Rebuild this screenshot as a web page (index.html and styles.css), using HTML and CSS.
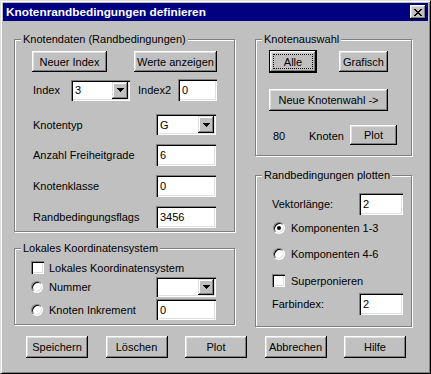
FILE: index.html
```html
<!DOCTYPE html>
<html lang="de">
<head>
    <meta charset="UTF-8">
    <title>Knotenrandbedingungen definieren</title>
    <link rel="stylesheet" href="styles.css">
</head>
<body>

<div class="window">
    <div class="titlebar">
        <span class="title">Knotenrandbedingungen definieren</span>
        <span class="close-btn">
            <svg width="8" height="7" viewBox="0 0 8 7"><path d="M0 0h2v1H0z M6 0h2v1H6z M1 1h2v1H1z M5 1h2v1H5z M2 2h4v1H2z M3 3h2v1H3z M2 4h4v1H2z M1 5h2v1H1z M5 5h2v1H5z M0 6h2v1H0z M6 6h2v1H6z" fill="#000"/></svg>
        </span>
    </div>

    <div class="content">
        <!-- linke Spalte -->
        <div class="col">
            <div class="group group-daten">
                <span class="group-label">Knotendaten (Randbedingungen)</span>
                <div class="row btn-row">
                    <button class="btn btn-neu">Neuer Index</button>
                    <button class="btn btn-werte">Werte anzeigen</button>
                </div>
                <div class="row row-index">
                    <span class="lbl lbl-index">Index</span>
                    <div class="combo combo-index">
                        <span class="val">3</span>
                        <span class="drop"><svg width="7" height="4" viewBox="0 0 7 4"><path d="M0 0h7v1H0z M1 1h5v1H1z M2 2h3v1H2z M3 3h1v1H3z" fill="#000"/></svg></span>
                    </div>
                    <span class="lbl lbl-index2">Index2</span>
                    <div class="field field-index2">0</div>
                </div>
                <div class="row frow frow-first">
                    <span class="lbl lbl-wide">Knotentyp</span>
                    <div class="combo combo-wide">
                        <span class="val">G</span>
                        <span class="drop"><svg width="7" height="4" viewBox="0 0 7 4"><path d="M0 0h7v1H0z M1 1h5v1H1z M2 2h3v1H2z M3 3h1v1H3z" fill="#000"/></svg></span>
                    </div>
                </div>
                <div class="row frow">
                    <span class="lbl lbl-wide">Anzahl Freiheitgrade</span>
                    <div class="field field-wide">6</div>
                </div>
                <div class="row frow">
                    <span class="lbl lbl-wide">Knotenklasse</span>
                    <div class="field field-wide">0</div>
                </div>
                <div class="row frow">
                    <span class="lbl lbl-wide">Randbedingungsflags</span>
                    <div class="field field-wide">3456</div>
                </div>
            </div>

            <div class="group group-lokal">
                <span class="group-label">Lokales Koordinatensystem</span>
                <div class="row check-row">
                    <span class="checkbox"></span>
                    <span class="lbl check-lbl">Lokales Koordinatensystem</span>
                </div>
                <div class="row opt-row opt-nummer">
                    <span class="radio"></span>
                    <span class="lbl opt-lbl">Nummer</span>
                    <div class="combo combo-wide combo-short">
                        <span class="val"></span>
                        <span class="drop"><svg width="7" height="4" viewBox="0 0 7 4"><path d="M0 0h7v1H0z M1 1h5v1H1z M2 2h3v1H2z M3 3h1v1H3z" fill="#000"/></svg></span>
                    </div>
                </div>
                <div class="row opt-row opt-inkrement">
                    <span class="radio"></span>
                    <span class="lbl opt-lbl">Knoten Inkrement</span>
                    <div class="field field-wide field-short">0</div>
                </div>
            </div>
        </div>

        <!-- rechte Spalte -->
        <div class="col">
            <div class="group group-auswahl">
                <span class="group-label">Knotenauswahl</span>
                <div class="row btn-row2">
                    <button class="btn btn-default btn-alle"><span class="focus">Alle</span></button>
                    <button class="btn btn-grafisch">Grafisch</button>
                </div>
                <button class="btn btn-neue">Neue Knotenwahl -&gt;</button>
                <div class="row plot-row">
                    <span class="lbl num-lbl">80</span>
                    <span class="lbl knoten-lbl">Knoten</span>
                    <button class="btn btn-plot">Plot</button>
                </div>
            </div>

            <div class="group group-plot">
                <span class="group-label">Randbedingungen plotten</span>
                <div class="row frow-r">
                    <span class="lbl lbl-r">Vektorlänge:</span>
                    <div class="field field-r">2</div>
                </div>
                <div class="row radio-row radio-first">
                    <span class="radio checked"></span>
                    <span class="lbl">Komponenten 1-3</span>
                </div>
                <div class="row radio-row">
                    <span class="radio"></span>
                    <span class="lbl">Komponenten 4-6</span>
                </div>
                <div class="row check-row2">
                    <span class="checkbox"></span>
                    <span class="lbl">Superponieren</span>
                </div>
                <div class="row frow-r frow-farb">
                    <span class="lbl lbl-r">Farbindex:</span>
                    <div class="field field-r">2</div>
                </div>
            </div>
        </div>
    </div>

    <div class="footer">
        <button class="btn btn-foot">Speichern</button>
        <button class="btn btn-foot">Löschen</button>
        <button class="btn btn-foot">Plot</button>
        <button class="btn btn-foot">Abbrechen</button>
        <button class="btn btn-foot">Hilfe</button>
    </div>
</div>

</body>
</html>
```

FILE: styles.css
```css
* {
    box-sizing: border-box;
}
body {
    margin: 0;
    font-family: "Liberation Sans", Arial, sans-serif;
    font-size: 11px;
    color: #000;
}
.window {
    width: 431px;
    height: 374px;
    background: #c0c0c0;
    border: 1px solid;
    border-color: #dfdfdf #000 #000 #dfdfdf;
    box-shadow: inset 1px 1px #fff, inset -1px -1px #808080;
    padding: 2px;
}
.titlebar {
    height: 18px;
    background: #000080;
    color: #fff;
    display: flex;
    align-items: center;
    justify-content: space-between;
    padding: 0 2px 0 3px;
    font-weight: bold;
    font-size: 11.8px;
}
.close-btn {
    width: 16px;
    height: 14px;
    background: #c0c0c0;
    display: flex;
    align-items: center;
    justify-content: center;
    box-shadow: inset -1px -1px #000, inset 1px 1px #fff, inset -2px -2px #808080, inset 2px 2px #dfdfdf;
}
.close-btn svg {
    display: block;
    margin-left: -1px;
}

.content {
    display: grid;
    grid-template-columns: 221px 157px;
    column-gap: 20px;
    padding: 18px 0 0 11px;
    align-items: start;
}
.col {
    display: flex;
    flex-direction: column;
}

/* Gruppenrahmen */
.group {
    position: relative;
    border: 1px solid #808080;
    box-shadow: inset 1px 1px #fff, 1px 1px #fff;
}
.group-label {
    position: absolute;
    top: -7px;
    left: 6px;
    padding: 0 2px;
    background: #c0c0c0;
    line-height: 13px;
    white-space: nowrap;
}
.group-daten { height: 193px; padding: 11px 0 0 17px; }
.group-lokal { height: 77px; margin-top: 16px; padding: 12px 0 0 16px; }
.group-auswahl { height: 117px; padding: 10px 0 0 13px; }
.group-plot { height: 152px; margin-top: 19px; padding: 17px 0 0 16px; }

.row {
    display: flex;
    align-items: center;
}
.lbl {
    white-space: nowrap;
}

/* Knöpfe */
.btn {
    font: inherit;
    color: #000;
    background: #c0c0c0;
    border: 0;
    padding: 0;
    height: 21px;
    box-shadow: inset -1px -1px #000, inset 1px 1px #fff, inset -2px -2px #808080, inset 2px 2px #dfdfdf;
}
.btn-default {
    display: flex;
    box-shadow: inset 0 0 0 1px #000, inset -2px -2px #000, inset 2px 2px #fff, inset -3px -3px #808080, inset 3px 3px #dfdfdf;
}
.btn-default .focus {
    flex: 1;
    margin: 4px;
    border: 1px dotted #000;
    display: flex;
    align-items: center;
    justify-content: center;
}

/* Eingabefelder */
.field {
    background: #fff;
    display: flex;
    align-items: center;
    padding-left: 4px;
    box-shadow: inset 1px 1px #808080, inset 2px 2px #000, inset -1px -1px #fff, inset -2px -2px #dfdfdf;
}
.combo {
    background: #fff;
    display: flex;
    align-items: stretch;
    padding: 2px;
    box-shadow: inset 1px 1px #808080, inset 2px 2px #000, inset -1px -1px #fff, inset -2px -2px #dfdfdf;
}
.combo .val {
    flex: 1;
    display: flex;
    align-items: center;
    padding-left: 2px;
}
.combo .drop {
    width: 16px;
    background: #c0c0c0;
    display: flex;
    align-items: center;
    justify-content: center;
    box-shadow: inset -1px -1px #000, inset 1px 1px #dfdfdf, inset -2px -2px #808080, inset 2px 2px #fff;
}
.combo .drop svg {
    display: block;
}
.checkbox {
    width: 13px;
    height: 13px;
    flex-shrink: 0;
    background: #fff;
    box-shadow: inset 1px 1px #808080, inset 2px 2px #000, inset -1px -1px #fff, inset -2px -2px #dfdfdf;
}
.radio {
    width: 12px;
    height: 12px;
    flex-shrink: 0;
    border-radius: 50%;
    background: #fff;
    border: 1px solid;
    border-color: #808080 #fff #fff #808080;
    box-shadow: inset 1px 1px #000, inset -1px -1px #dfdfdf;
    display: flex;
    align-items: center;
    justify-content: center;
}
.radio.checked::after {
    content: "";
    width: 4px;
    height: 4px;
    border-radius: 50%;
    background: #000;
}

/* Knotendaten */
.btn-row { height: 21px; gap: 27px; }
.btn-neu { width: 75px; }
.btn-werte { width: 83px; }
.row-index { margin-top: 7px; height: 22px; }
.lbl-index { width: 39px; padding-left: 1px; }
.combo-index { width: 59px; height: 21px; }
.lbl-index2 { width: 40px; margin-left: 8px; }
.field-index2 { width: 39px; height: 22px; }
.frow { height: 22px; margin-top: 9px; }
.frow-first { height: 21px; margin-top: 13px; }
.lbl-wide { width: 124px; padding-left: 1px; }
.combo-wide { width: 60px; height: 21px; }
.field-wide { width: 60px; height: 22px; }

/* Lokales Koordinatensystem */
.check-row { height: 13px; }
.check-lbl { margin-left: 5px; }
.opt-lbl { width: 107px; margin-left: 6px; }
.opt-nummer { height: 20px; margin-top: 3px; }
.opt-inkrement { height: 21px; margin-top: 2px; }
.combo-short { height: 20px; }
.field-short { height: 21px; }

/* Knotenauswahl */
.btn-row2 { height: 23px; gap: 22px; }
.btn-alle { width: 48px; height: 23px; }
.btn-grafisch { width: 49px; }
.btn-neue { display: block; width: 119px; height: 22px; margin-top: 16px; }
.plot-row { height: 20px; margin-top: 14px; }
.num-lbl { width: 40px; padding: 2px 0 0 4px; }
.knoten-lbl { width: 41px; padding-top: 2px; }
.btn-plot { width: 47px; height: 20px; }

/* Randbedingungen plotten */
.frow-r { height: 22px; }
.lbl-r { width: 87px; }
.field-r { width: 44px; height: 22px; }
.radio-row { height: 12px; margin-top: 14px; padding-left: 1px; }
.radio-row .lbl { margin-left: 6px; }
.radio-first { margin-top: 7px; }
.check-row2 { height: 13px; margin-top: 14px; }
.check-row2 .lbl { margin-left: 6px; }
.frow-farb { margin-top: 6px; }

/* Fußzeile */
.footer {
    display: flex;
    justify-content: space-between;
    padding: 0 22px 0 23px;
    margin-top: 9px;
}
.btn-foot {
    width: 62px;
    height: 22px;
}
```
